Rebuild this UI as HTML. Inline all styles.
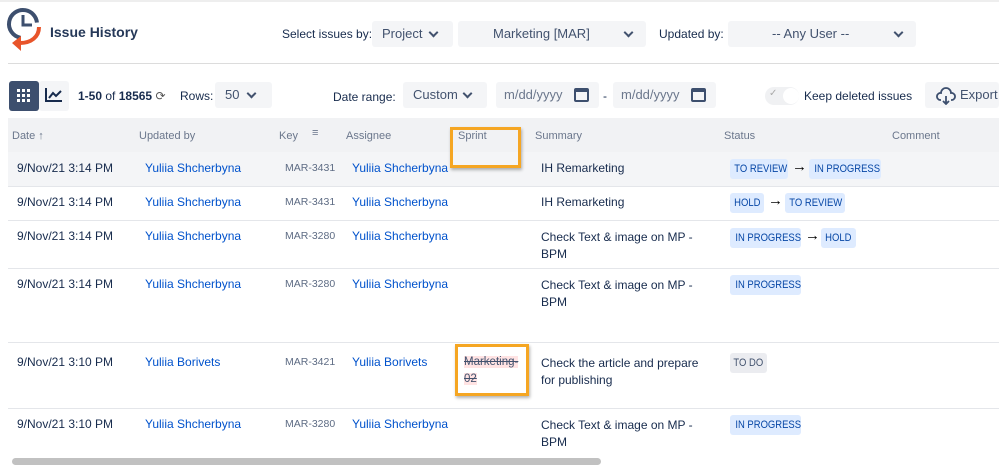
<!DOCTYPE html>
<html><head><meta charset="utf-8"><style>
*{margin:0;padding:0;box-sizing:border-box}
body{width:999px;height:471px;overflow:hidden;background:#fff;font-family:"Liberation Sans",sans-serif;font-size:12px;color:#172b4d;position:relative}
.a{position:absolute;white-space:nowrap}
.sel{position:absolute;background:#f4f5f7;border-radius:3px;color:#42526e;font-size:13px;height:26px;line-height:26px}
.chev{position:absolute;top:8px;width:7px;height:7px;border-right:2px solid #42526e;border-bottom:2px solid #42526e;transform:rotate(45deg)}
.h{position:absolute;top:130px;color:#6b778c;font-size:11px}
.t{position:absolute;font-size:12px;color:#172b4d}
.l{color:#0052cc}
.k{color:#5e6c84;font-size:10.5px}
.b{position:absolute;background:#deebff;color:#0747a6;font-size:11px;text-align:center;height:20px;line-height:20px;border-radius:3px;white-space:nowrap}
.b span{display:inline-block;transform:scaleX(.86)}
.ar{position:absolute;font-size:15px;font-weight:bold;color:#000}
.line{position:absolute;left:8px;right:0;height:1px;background:#e4e6ea}
</style></head><body>
<div class="a" style="left:0;top:0;width:999px;height:2px;background:#eee"></div>
<svg class="a" style="left:6px;top:7px" width="38" height="44" viewBox="0 0 38 44"><circle cx="17" cy="17" r="14" fill="none" stroke="#3d4f6e" stroke-width="4" stroke-dasharray="62 30" transform="rotate(100 17 17)"/><path d="M17 8V18H26" fill="none" stroke="#3d4f6e" stroke-width="3"/><path d="M33 20C33 30 25 36 14 36" fill="none" stroke="#e8542a" stroke-width="4"/><path d="M6 36L15 29V44Z" fill="#e8542a"/></svg>
<div class="a" style="left:50px;top:24px;font-size:14px;font-weight:bold;color:#253858">Issue History</div>
<div class="a" style="left:282px;top:27px;font-size:12px;color:#172b4d">Select issues by:</div>
<div class="sel" style="left:372px;top:21px;width:81px"><span style="margin-left:10px">Project</span><i class="chev" style="left:58px"></i></div>
<div class="sel" style="left:458px;top:21px;width:188px"><span style="margin-left:35px">Marketing [MAR]</span><i class="chev" style="left:167px"></i></div>
<div class="a" style="left:659px;top:27px;color:#172b4d">Updated by:</div>
<div class="sel" style="left:728px;top:21px;width:188px"><span style="margin-left:44px">-- Any User --</span><i class="chev" style="left:167px"></i></div>
<div class="a" style="left:8px;top:63px;width:991px;height:1px;background:#dcdcdc"></div>
<div class="a" style="left:9px;top:81px;width:30px;height:30px;background:#3d4f6e;border-radius:3px"></div>
<svg class="a" style="left:16px;top:88px" width="16" height="16"><g fill="#fff"><rect x="1" y="1" width="3" height="3"/><rect x="6" y="1" width="3" height="3"/><rect x="11" y="1" width="3" height="3"/><rect x="1" y="6" width="3" height="3"/><rect x="6" y="6" width="3" height="3"/><rect x="11" y="6" width="3" height="3"/><rect x="1" y="11" width="3" height="3"/><rect x="6" y="11" width="3" height="3"/><rect x="11" y="11" width="3" height="3"/></g></svg>
<div class="a" style="left:39px;top:81px;width:30px;height:30px;background:#f4f5f7;border-radius:3px"></div>
<svg class="a" style="left:45px;top:87px" width="18" height="16"><path d="M1 1V14H17" fill="none" stroke="#172b4d" stroke-width="2"/><path d="M4 11L8 6L11 9L16 4" fill="none" stroke="#172b4d" stroke-width="2"/></svg>
<div class="a" style="left:78px;top:89px;font-size:12px"><b>1-50</b> of <b>18565</b> <span style="color:#555">⟳</span></div>
<div class="a" style="left:180px;top:89px">Rows:</div>
<div class="sel" style="left:215px;top:82px;width:57px"><span style="margin-left:10px">50</span><i class="chev" style="left:33px"></i></div>
<div class="a" style="left:333px;top:90px">Date range:</div>
<div class="sel" style="left:403px;top:82px;width:84px"><span style="margin-left:10px">Custom</span><i class="chev" style="left:61px"></i></div>
<div class="sel" style="left:496px;top:82px;width:103px;color:#6b778c"><span style="margin-left:8px">m/dd/yyyy</span></div>
<div class="a" style="left:574px;top:88px;width:15px;height:14px;border:2px solid #3d4f6e;border-top-width:4px;border-radius:2px"></div>
<div class="a" style="left:603px;top:89px">-</div>
<div class="sel" style="left:613px;top:82px;width:103px;color:#6b778c"><span style="margin-left:8px">m/dd/yyyy</span></div>
<div class="a" style="left:691px;top:88px;width:15px;height:14px;border:2px solid #3d4f6e;border-top-width:4px;border-radius:2px"></div>
<div class="a" style="left:765px;top:87px;width:34px;height:18px;background:#f0f1f3;border-radius:9px"></div>
<div class="a" style="left:783px;top:88px;width:16px;height:16px;background:#fff;border-radius:8px"></div>
<div class="a" style="left:769px;top:88px;color:#aaa;font-size:10px">✓</div>
<div class="a" style="left:804px;top:89px">Keep deleted issues</div>
<div class="sel" style="left:925px;top:82px;width:74px;color:#42526e"><span style="margin-left:35px">Export</span></div>
<svg class="a" style="left:936px;top:87px" width="20" height="18"><path d="M5 13H4A3.5 3.5 0 0 1 5 6A5 5 0 0 1 15 6A3.5 3.5 0 0 1 16 13H15M10 9V17M7 14L10 17L13 14" fill="none" stroke="#3d4f6e" stroke-width="1.8"/></svg>
<div class="a" style="left:8px;top:118px;width:991px;height:34px;background:#f1f2f4"></div>
<div class="h" style="left:12px">Date ↑</div>
<div class="h" style="left:139px">Updated by</div>
<div class="h" style="left:279px">Key</div>
<div class="h" style="left:312px;top:127px">≡</div>
<div class="h" style="left:346px">Assignee</div>
<div class="h" style="left:458px">Sprint</div>
<div class="h" style="left:535px">Summary</div>
<div class="h" style="left:724px">Status</div>
<div class="h" style="left:892px">Comment</div>
<div class="a" style="left:8px;top:152px;width:991px;height:34px;background:#f4f5f7"></div>
<div class="a" style="left:450px;top:127px;width:71px;height:41px;border:3px solid #f5a623;box-shadow:1px 2px 3px rgba(0,0,0,.3)"></div>
<div class="line" style="top:186px"></div><div class="line" style="top:220px"></div><div class="line" style="top:268px"></div><div class="line" style="top:342px"></div><div class="line" style="top:408px"></div>

<div class="t" style="left:17px;top:161px">9/Nov/21 3:14 PM</div><div class="t l" style="left:145px;top:161px">Yuliia Shcherbyna</div><div class="t k" style="left:285px;top:162px">MAR-3431</div><div class="t l" style="left:352px;top:161px">Yuliia Shcherbyna</div><div class="t" style="left:541px;top:161px">IH Remarketing</div>
<div class="b" style="left:730px;top:159px;width:58px"><span>TO REVIEW</span></div><div class="ar" style="left:792px;top:158px">→</div><div class="b" style="left:809px;top:159px;width:72px"><span>IN PROGRESS</span></div>

<div class="t" style="left:17px;top:195px">9/Nov/21 3:14 PM</div><div class="t l" style="left:145px;top:195px">Yuliia Shcherbyna</div><div class="t k" style="left:285px;top:196px">MAR-3431</div><div class="t l" style="left:352px;top:195px">Yuliia Shcherbyna</div><div class="t" style="left:541px;top:195px">IH Remarketing</div>
<div class="b" style="left:730px;top:193px;width:34px"><span>HOLD</span></div><div class="ar" style="left:768px;top:192px">→</div><div class="b" style="left:785px;top:193px;width:60px"><span>TO REVIEW</span></div>

<div class="t" style="left:17px;top:229px">9/Nov/21 3:14 PM</div><div class="t l" style="left:145px;top:229px">Yuliia Shcherbyna</div><div class="t k" style="left:285px;top:230px">MAR-3280</div><div class="t l" style="left:352px;top:229px">Yuliia Shcherbyna</div><div class="t" style="left:541px;top:229px;line-height:17px">Check Text &amp; image on MP -<br>BPM</div>
<div class="b" style="left:730px;top:228px;width:71px"><span>IN PROGRESS</span></div><div class="ar" style="left:805px;top:227px">→</div><div class="b" style="left:821px;top:228px;width:35px"><span>HOLD</span></div>

<div class="t" style="left:17px;top:277px">9/Nov/21 3:14 PM</div><div class="t l" style="left:145px;top:277px">Yuliia Shcherbyna</div><div class="t k" style="left:285px;top:278px">MAR-3280</div><div class="t l" style="left:352px;top:277px">Yuliia Shcherbyna</div><div class="t" style="left:541px;top:277px;line-height:17px">Check Text &amp; image on MP -<br>BPM</div>
<div class="b" style="left:730px;top:275px;width:71px"><span>IN PROGRESS</span></div>

<div class="t" style="left:17px;top:355px">9/Nov/21 3:10 PM</div><div class="t l" style="left:145px;top:355px">Yuliia Borivets</div><div class="t k" style="left:285px;top:356px">MAR-3421</div><div class="t l" style="left:352px;top:355px">Yuliia Borivets</div>
<div class="a" style="left:455px;top:344px;width:74px;height:52px;border:3px solid #f5a623;box-shadow:1px 2px 3px rgba(0,0,0,.3)"></div>
<div class="t" style="left:464px;top:354px;line-height:17px;text-decoration:line-through;color:#42526e;font-size:11.5px"><span style="background:#ffe3e3">Marketing-</span><br><span style="background:#ffe3e3">02</span></div>
<div class="t" style="left:541px;top:355px;line-height:17px">Check the article and prepare<br>for publishing</div>
<div class="b" style="left:730px;top:353px;width:37px;background:#ebecf0;color:#42526e"><span>TO DO</span></div>

<div class="t" style="left:17px;top:417px">9/Nov/21 3:10 PM</div><div class="t l" style="left:145px;top:417px">Yuliia Shcherbyna</div><div class="t k" style="left:285px;top:418px">MAR-3280</div><div class="t l" style="left:352px;top:417px">Yuliia Shcherbyna</div><div class="t" style="left:541px;top:417px;line-height:17px">Check Text &amp; image on MP -<br>BPM</div>
<div class="b" style="left:730px;top:415px;width:71px"><span>IN PROGRESS</span></div>
<div class="a" style="left:12px;top:458px;width:589px;height:7px;background:#c1c1c1;border-radius:4px"></div>
</body></html>
